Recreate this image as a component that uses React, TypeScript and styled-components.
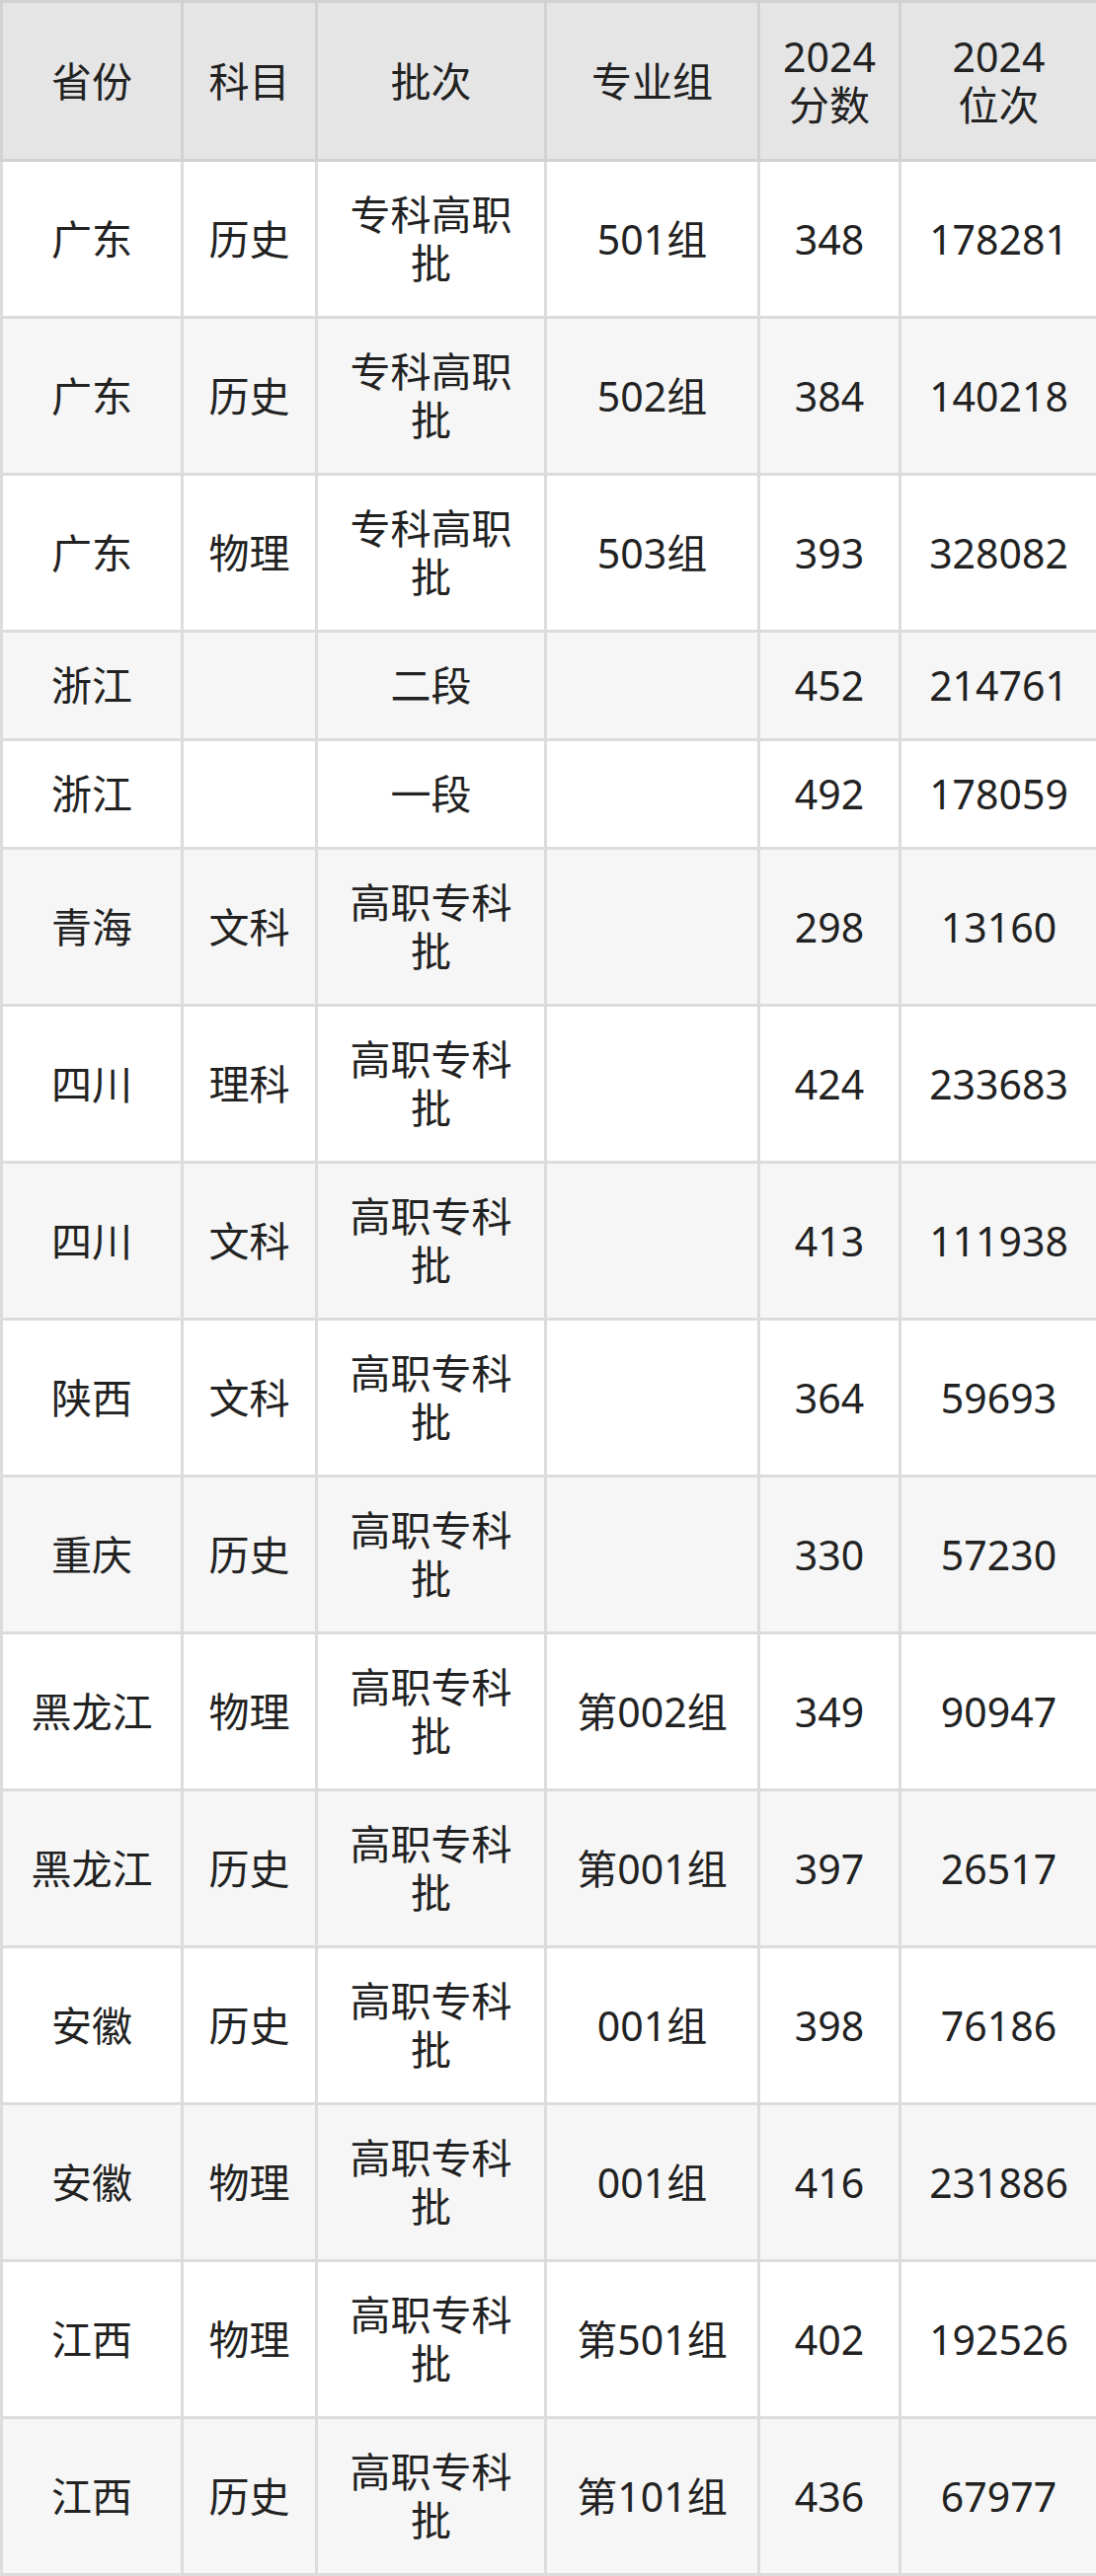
import React from 'react';
import styled, { createGlobalStyle } from 'styled-components';

const GlobalStyle = createGlobalStyle`
  html, body {
    margin: 0;
    padding: 0;
    background: #ffffff;
  }
`;

const columns = [183, 136, 232, 216, 143, 200];
const headers = ['省份', '科目', '批次', '专业组', '2024\n分数', '2024\n位次'];

const rows: string[][] = [
  ['广东', '历史', '专科高职批', '501组', '348', '178281'],
  ['广东', '历史', '专科高职批', '502组', '384', '140218'],
  ['广东', '物理', '专科高职批', '503组', '393', '328082'],
  ['浙江', '', '二段', '', '452', '214761'],
  ['浙江', '', '一段', '', '492', '178059'],
  ['青海', '文科', '高职专科批', '', '298', '13160'],
  ['四川', '理科', '高职专科批', '', '424', '233683'],
  ['四川', '文科', '高职专科批', '', '413', '111938'],
  ['陕西', '文科', '高职专科批', '', '364', '59693'],
  ['重庆', '历史', '高职专科批', '', '330', '57230'],
  ['黑龙江', '物理', '高职专科批', '第002组', '349', '90947'],
  ['黑龙江', '历史', '高职专科批', '第001组', '397', '26517'],
  ['安徽', '历史', '高职专科批', '001组', '398', '76186'],
  ['安徽', '物理', '高职专科批', '001组', '416', '231886'],
  ['江西', '物理', '高职专科批', '第501组', '402', '192526'],
  ['江西', '历史', '高职专科批', '第101组', '436', '67977'],
];

const Table = styled.table`
  width: 1110px;
  table-layout: fixed;
  border-collapse: collapse;
  font-family: "Noto Sans", "Noto Sans CJK SC", sans-serif;
  font-size: 41px;
  line-height: 49px;
  color: #222222;
  border: 3px solid #dcdcdc;
`;

// header text keeps its explicit line break (2024 / 分数)
const HeadCell = styled.th`
  background: #e5e5e5;
  font-weight: 400;
  text-align: center;
  vertical-align: middle;
  white-space: pre-line;
  padding: 30px 20px;
  border: 3px solid #d2d2d2;
`;

const Row = styled.tr<{ $striped: boolean }>`
  background: ${p => (p.$striped ? '#f6f6f6' : '#ffffff')};
`;

const Cell = styled.td`
  text-align: center;
  vertical-align: middle;
  padding: 29px 20px;
  border: 3px solid #dcdcdc;
`;

export default function App() {
  return (
    <>
      <GlobalStyle />
      <Table>
        <colgroup>
          {columns.map((w, i) => (
            <col key={i} style={{ width: w }} />
          ))}
        </colgroup>
        <thead>
          <tr>
            {headers.map((h, i) => (
              <HeadCell key={i}>{h}</HeadCell>
            ))}
          </tr>
        </thead>
        <tbody>
          {rows.map((r, i) => (
            <Row key={i} $striped={i % 2 === 1}>
              {r.map((c, j) => (
                <Cell key={j}>{c}</Cell>
              ))}
            </Row>
          ))}
        </tbody>
      </Table>
    </>
  );
}
